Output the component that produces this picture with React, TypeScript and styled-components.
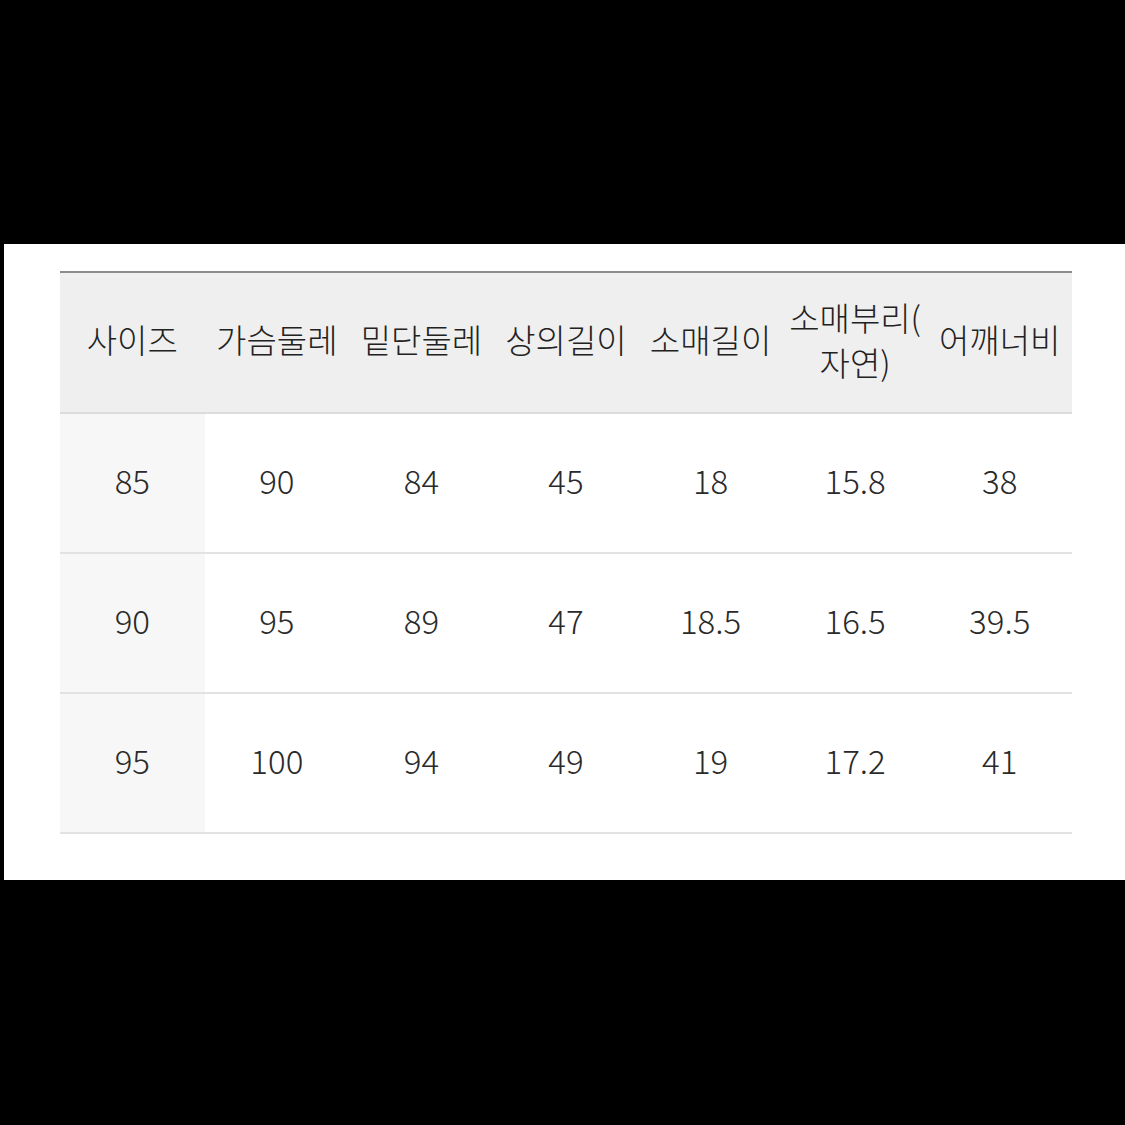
import styled, { createGlobalStyle } from 'styled-components';

const GlobalStyle = createGlobalStyle`
  html, body {
    margin: 0;
    padding: 0;
    background: #000;
  }
  body {
    font-family: "Noto Sans CJK KR", "Noto Sans", sans-serif;
  }
`;

const HEADERS: string[][] = [
  ['사이즈'],
  ['가슴둘레'],
  ['밑단둘레'],
  ['상의길이'],
  ['소매길이'],
  ['소매부리(', '자연)'],
  ['어깨너비'],
];

const ROWS: string[][] = [
  ['85', '90', '84', '45', '18', '15.8', '38'],
  ['90', '95', '89', '47', '18.5', '16.5', '39.5'],
  ['95', '100', '94', '49', '19', '17.2', '41'],
];

const Screen = styled.div`
  width: 1125px;
  height: 1125px;
  display: flex;
  flex-direction: column;
  background: #000;
`;

const Sheet = styled.div`
  margin-top: 244px;
  margin-left: 4px;
  height: 636px;
  background: #fff;
  padding: 27px 53px 0 56px;
  box-sizing: border-box;
`;

const Table = styled.table`
  width: 1012px;
  border-collapse: collapse;
  table-layout: fixed;
  border-top: 2px solid #8c8c8c;
`;

const HeadCell = styled.th`
  height: 133px;
  padding: 0 0 6px;
  background: #efefef;
  border-bottom: 2px solid #dcdcdc;
  font-weight: 300;
  font-size: 33px;
  line-height: 45px;
  color: #222;
  text-align: center;
  vertical-align: middle;
  white-space: nowrap;
`;

const Cell = styled.td<{ $first?: boolean }>`
  height: 132px;
  padding: 0 0 6px;
  background: ${({ $first }) => ($first ? '#f7f7f7' : '#fff')};
  border-bottom: 2px solid #e2e2e2;
  font-size: 33px;
  font-weight: 300;
  color: #2a2a2a;
  text-align: center;
  vertical-align: middle;
`;

const Line = styled.span`
  display: block;
`;

export default function App() {
  return (
    <>
      <GlobalStyle />
      <Screen>
        <Sheet>
          <Table>
            <thead>
              <tr>
                {HEADERS.map((lines) => (
                  <HeadCell key={lines.join('')}>
                    {lines.map((l) => (
                      <Line key={l}>{l}</Line>
                    ))}
                  </HeadCell>
                ))}
              </tr>
            </thead>
            <tbody>
              {ROWS.map((row) => (
                <tr key={row[0]}>
                  {row.map((v, i) => (
                    <Cell key={i} $first={i === 0}>
                      {v}
                    </Cell>
                  ))}
                </tr>
              ))}
            </tbody>
          </Table>
        </Sheet>
      </Screen>
    </>
  );
}
